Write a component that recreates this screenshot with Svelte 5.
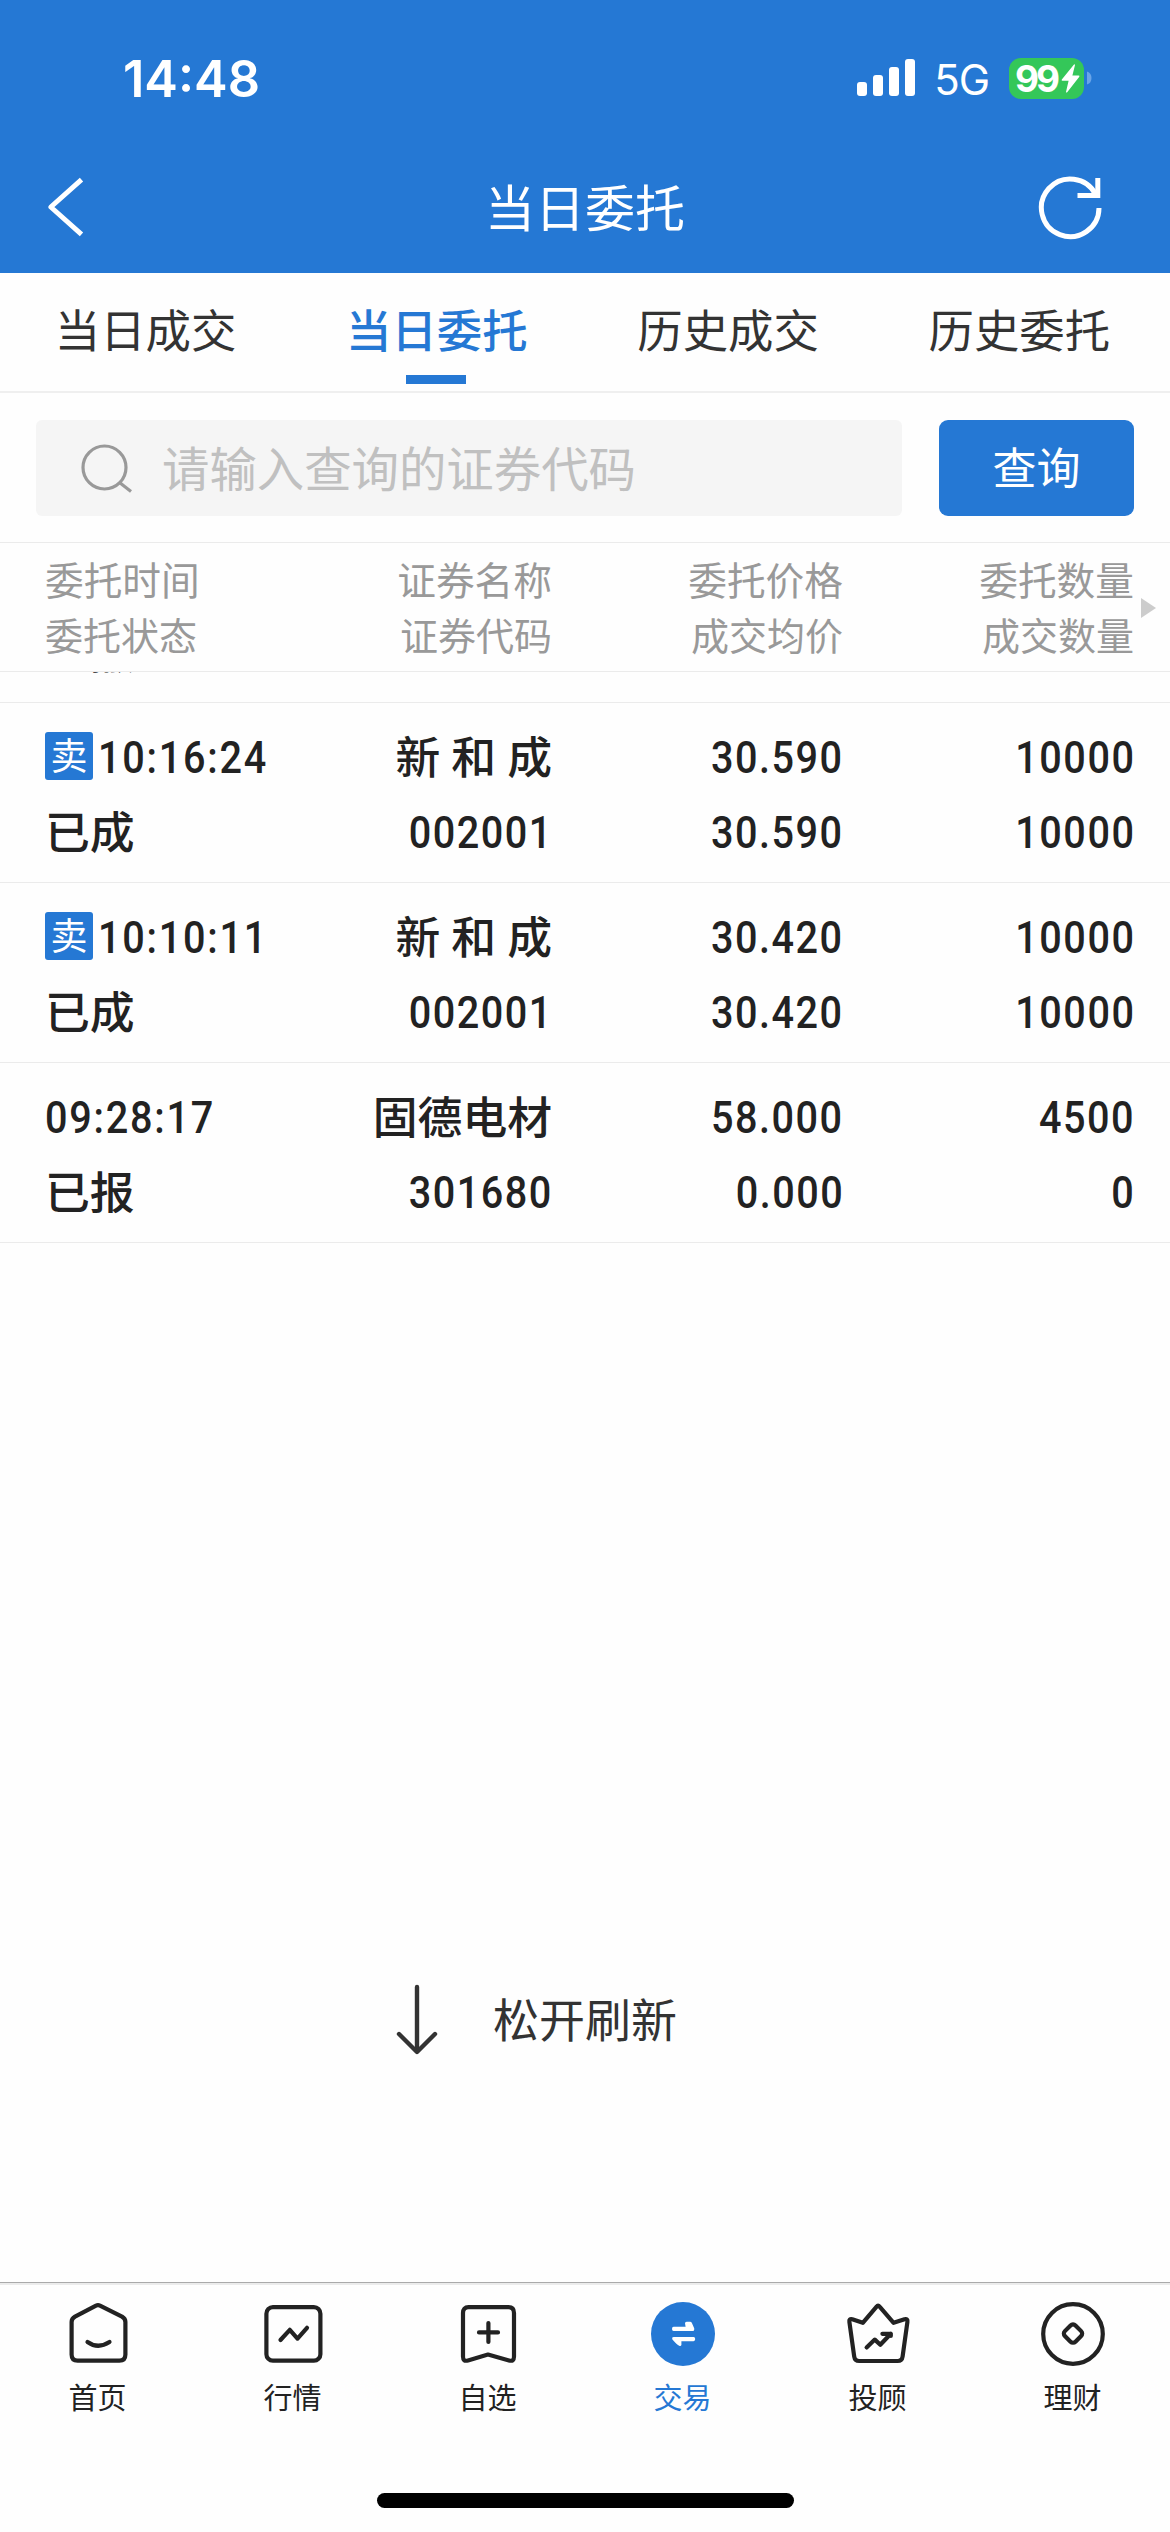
<script>
    const tabs = ['当日成交', '当日委托', '历史成交', '历史委托'];
    let activeTab = $state('当日委托');

    const columns = [
        ['委托时间', '委托状态'],
        ['证券名称', '证券代码'],
        ['委托价格', '成交均价'],
        ['委托数量', '成交数量']
    ];

    const orders = [
        { id: 2, side: '卖', time: '10:16:24', status: '已成', name: '新 和 成', code: '002001', price: '30.590', avg: '30.590', amount: '10000', filled: '10000' },
        { id: 3, side: '卖', time: '10:10:11', status: '已成', name: '新 和 成', code: '002001', price: '30.420', avg: '30.420', amount: '10000', filled: '10000' },
        { id: 4, side: '', time: '09:28:17', status: '已报', name: '固德电材', code: '301680', price: '58.000', avg: '0.000', amount: '4500', filled: '0' }
    ];

    const nav = [
        { id: 'home', label: '首页' },
        { id: 'market', label: '行情' },
        { id: 'watch', label: '自选' },
        { id: 'trade', label: '交易' },
        { id: 'advisor', label: '投顾' },
        { id: 'wealth', label: '理财' }
    ];
    let activeNav = $state('trade');
</script>

<div class="app">
    <header>
        <div class="status">
            <span class="clock">14:48</span>
            <div class="indicators">
                <svg class="signal" width="58" height="38" viewBox="0 0 58 38" fill="#fff">
                    <rect x="0" y="23" width="10" height="14" rx="3" />
                    <rect x="16" y="16" width="10" height="21" rx="3" />
                    <rect x="32" y="8" width="10" height="29" rx="3" />
                    <rect x="48" y="0" width="10" height="37" rx="3" />
                </svg>
                <span class="network">5G</span>
                <div class="battery">
                    <span>99</span>
                    <svg width="19" height="29" viewBox="0 0 19 29" fill="#fff">
                        <path d="M13 0.5 L0.8 15.6 Q0.2 16.8 1.5 16.8 H7.6 L5 28 Q5.2 29 6.2 28.2 L18.3 12.8 Q18.9 11.6 17.5 11.6 H11.4 L14 1 Q13.8 0 13 0.5 Z" />
                    </svg>
                </div>
                <svg class="nub" width="5" height="14" viewBox="0 0 5 14">
                    <path d="M0 0.5 Q4.5 2 4.5 7 Q4.5 12 0 13.5 Z" fill="#6aa5e8" />
                </svg>
            </div>
        </div>
        <div class="titlebar">
            <button class="plain" aria-label="返回">
                <svg width="44" height="62" viewBox="0 0 44 62" fill="none" stroke="#fff" stroke-width="5">
                    <path d="M38.5 3.6 L7.8 31 L38.5 58.4" stroke-linejoin="round" />
                </svg>
            </button>
            <h1>当日委托</h1>
            <button class="plain" aria-label="刷新">
                <svg width="66" height="66" viewBox="0 0 66 66" fill="none" stroke="#fff" stroke-width="5">
                    <path d="M62 34 A28.8 28.8 0 1 1 58.8 20.6" />
                    <path d="M60.8 4 V21.6 H40.5" />
                </svg>
            </button>
        </div>
    </header>

    <nav class="tabs">
        {#each tabs as tab}
            <button class="tab" class:active={tab === activeTab} onclick={() => (activeTab = tab)}>{tab}</button>
        {/each}
    </nav>

    <div class="search">
        <div class="field">
            <svg width="54" height="50" viewBox="0 0 54 50" fill="none" stroke="#999" stroke-width="3.2">
                <circle cx="24.5" cy="24.5" r="21.5" />
                <path d="M39.5 39.5 L51 48.5" />
            </svg>
            <span>请输入查询的证券代码</span>
        </div>
        <button class="query">查询</button>
    </div>

    <div class="columns">
        {#each columns as [top, bottom]}
            <div class="cell">
                <span>{top}</span>
                <span class="sub">{bottom}</span>
            </div>
        {/each}
        <i class="more"></i>
    </div>

    <div class="list">
        <!-- row scrolled almost out of view -->
        <div class="row">
            <div class="cell last">
                <span class="cn">已撤</span>
            </div>
        </div>
        {#each orders as order (order.id)}
            <div class="row">
                <div class="cell">
                    <div class="line">
                        {#if order.side}<b class="side">{order.side}</b>{/if}
                        <span class="num">{order.time}</span>
                    </div>
                    <div class="line cn">{order.status}</div>
                </div>
                <div class="cell">
                    <div class="line cn name">{order.name}</div>
                    <div class="line num">{order.code}</div>
                </div>
                <div class="cell">
                    <div class="line num">{order.price}</div>
                    <div class="line num">{order.avg}</div>
                </div>
                <div class="cell">
                    <div class="line num">{order.amount}</div>
                    <div class="line num">{order.filled}</div>
                </div>
            </div>
        {/each}
    </div>

    <div class="pull">
        <svg width="42" height="72" viewBox="0 0 42 72" fill="none" stroke="#333" stroke-width="4.4" stroke-linecap="round" stroke-linejoin="round">
            <path d="M21 3 V67" />
            <path d="M3 50 L21 68 L39 50" />
        </svg>
        <span>松开刷新</span>
    </div>

    <footer>
        {#each nav as item (item.id)}
            <button class="item" class:active={item.id === activeNav} onclick={() => (activeNav = item.id)}>
                <svg width="66" height="66" viewBox="0 0 66 66" fill="none" stroke="#222" stroke-width="4.2" stroke-linecap="round" stroke-linejoin="round">
                    {#if item.id === 'home'}
                        <path d="M31 4.6 Q33 3.6 35 4.6 L57 15.6 Q60.4 17.6 60.4 21 V53.5 Q60.4 59.7 54.4 59.7 H12.6 Q6.6 59.7 6.6 53.5 V21 Q6.6 17.6 10 15.6 Z" />
                        <path d="M22.5 41 Q33 48.5 44.5 41" />
                    {:else if item.id === 'market'}
                        <rect x="6.4" y="6.2" width="54" height="53.5" rx="6.5" />
                        <path d="M20.5 39 L29.8 28.8 L37.5 37.6 L47 26.8" />
                    {:else if item.id === 'watch'}
                        <path d="M13.5 6.2 H53.5 Q59 6.2 59 12 V55.5 Q59 61 54 59.4 L33 53.6 L13 59.4 Q8 61 8 55.5 V12 Q8 6.2 13.5 6.2 Z" />
                        <path d="M33.4 22 V41 M24 31.4 H43" />
                    {:else if item.id === 'trade'}
                        <circle cx="33" cy="33" r="32" fill="#2578d4" stroke="none" />
                        <path d="M23.6 25.8 H35.6 L35 22.2 Q35.2 20.8 37 20.8 H40 Q41.4 20.8 42 22.2 L44.2 27.2 Q44.6 30 42.6 30 H23.6 Q22 30 22 27.9 Q22 25.8 23.6 25.8 Z" fill="#fff" stroke="none" />
                        <path d="M43.6 40.2 H31.4 V44 Q31 45.4 29.2 44.8 Q27 43.6 22.4 38.4 Q21.6 36 23.8 36 H43.6 Q45.2 36 45.2 38.1 Q45.2 40.2 43.6 40.2 Z" fill="#fff" stroke="none" />
                    {:else if item.id === 'advisor'}
                        <path d="M31.6 5.6 Q33 3.6 34.6 5.6 L48.6 21.8 L59.5 18.2 Q63 17.4 62.4 21 L57.6 55.5 Q57 60 52.6 60 H14.2 Q9.8 60 9.2 55.5 L4.4 21 Q3.8 17.4 7.3 18.2 L17.8 21.8 Z" />
                        <path d="M21.6 46.4 L29.8 38.6 L35.3 43.8 L45.8 32.8 M37.4 32.8 H45.8 V35" />
                    {:else}
                        <circle cx="33" cy="33" r="29.8" />
                        <rect x="25.5" y="25.1" width="15" height="15" rx="3.5" transform="rotate(45 33 32.6)" />
                    {/if}
                </svg>
                <span>{item.label}</span>
            </button>
        {/each}
    </footer>
    <div class="home-indicator"></div>
</div>

<style>
    :global(body) {
        background: #fefefe;
    }

    .app {
        display: flex;
        flex-direction: column;
        width: 1170px;
        height: 2532px;
        overflow: hidden;
        background: #fefefe;
        color: #222;
        font-family: "Noto Sans CJK SC", sans-serif;
    }

    button {
        margin: 0;
        padding: 0;
        border: none;
        background: none;
        color: inherit;
        font-family: inherit;
    }

    svg {
        display: block;
        flex: none;
    }

    header {
        height: 273px;
        background: #2578d4;
        color: #fff;
    }

    .status {
        display: flex;
        justify-content: space-between;
        align-items: center;
        height: 156px;
        padding: 0 78px 0 123px;
        font-family: Inter, sans-serif;
    }

    .clock {
        font-size: 50.5px;
        font-weight: 600;
    }

    .indicators {
        display: flex;
        align-items: center;
    }

    .network {
        margin: 2px 20px 0 19px;
        font-size: 42px;
        letter-spacing: -1px;
    }

    .battery {
        display: flex;
        align-items: center;
        justify-content: flex-end;
        gap: 4px;
        box-sizing: border-box;
        width: 75px;
        height: 41px;
        padding-right: 4px;
        border-radius: 12px;
        background: #34c759;
        font-size: 37px;
        font-weight: 700;
        line-height: 41px;
        letter-spacing: -3px;
    }

    .nub {
        margin-left: 3px;
    }

    .titlebar {
        display: flex;
        justify-content: space-between;
        align-items: center;
        height: 102px;
        padding: 0 67px 0 43px;
    }

    h1 {
        margin: 0 0 4px 46px;
        font-size: 50px;
        font-weight: 400;
        line-height: 98px;
    }

    .tabs {
        display: flex;
        height: 118px;
        padding-right: 5px;
        border-bottom: 2px solid #efefef;
    }

    .tab {
        position: relative;
        flex: 1;
        padding-bottom: 8px;
        color: #333;
        font-size: 45.4px;
    }

    .tab.active {
        color: #2578d4;
        font-weight: 500;
    }

    .tab.active::after {
        content: '';
        position: absolute;
        left: 50%;
        bottom: 7px;
        width: 60px;
        height: 9px;
        margin-left: -31px;
        background: #2578d4;
    }

    .search {
        display: flex;
        gap: 37px;
        padding: 27px 36px 26px;
        border-bottom: 1px solid #ebebeb;
    }

    .field {
        display: flex;
        align-items: center;
        gap: 28px;
        flex: 1;
        height: 96px;
        padding-left: 44px;
        border-radius: 6px;
        background: #f5f5f5;
        color: #c0c0c0;
        font-size: 47.4px;
        line-height: 92px;
    }

    .field span {
        margin-bottom: 3px;
    }

    .query {
        width: 195px;
        height: 96px;
        padding-bottom: 4px;
        border-radius: 9px;
        background: #2578d4;
        color: #fff;
        font-size: 44px;
    }

    .columns,
    .row {
        position: relative;
        display: grid;
        grid-template-columns: 216px repeat(3, 291px);
        padding-left: 45px;
    }

    .cell {
        display: flex;
        flex-direction: column;
        align-items: flex-end;
        white-space: pre;
    }

    .cell:first-child {
        align-items: flex-start;
    }

    .columns {
        height: 128px;
        border-bottom: 1px solid #ebebeb;
        color: #999;
        font-size: 38.7px;
        line-height: 56px;
    }

    .columns .cell {
        padding-top: 7px;
    }

    .sub {
        font-size: 38px;
    }

    .more {
        position: absolute;
        left: 1141px;
        top: 55px;
        border: 10px solid transparent;
        border-left: 15px solid #ccc;
        border-right: none;
    }

    .list {
        display: flex;
        flex-direction: column;
        justify-content: flex-end;
        height: 571px;
        overflow: hidden;
    }

    .row {
        flex: none;
        height: 179px;
        border-bottom: 1px solid #ebebeb;
    }

    .row .cell {
        padding-top: 17px;
    }

    .row .last {
        padding-top: 92px;
    }

    .line {
        display: flex;
        align-items: center;
        height: 75px;
        line-height: 75px;
    }

    .cn {
        margin: -3px 0 3px;
        font-size: 44.8px;
        font-weight: 500;
        line-height: 75px;
    }

    .name {
        word-spacing: 1px;
    }

    /* narrow DIN-like figures */
    .num {
        font-family: Roboto, sans-serif;
        font-size: 45px;
        font-weight: 500;
        letter-spacing: 1.7px;
        transform: scaleX(0.88);
        transform-origin: right;
        margin-right: -1px;
    }

    .cell:first-child .num {
        letter-spacing: 2px;
        transform-origin: left;
    }

    .side {
        width: 48px;
        height: 48px;
        margin: 0 5px 3px 0;
        border-radius: 3px;
        background: #2578d4;
        color: #fff;
        font-size: 37px;
        font-weight: 400;
        line-height: 45px;
        text-align: center;
    }

    .pull {
        display: flex;
        align-items: center;
        gap: 55px;
        height: 72px;
        margin: 741px 0 0 396px;
        color: #333;
        font-size: 46px;
    }

    .pull span {
        margin-bottom: 6px;
    }

    footer {
        display: flex;
        height: 136px;
        margin-top: auto;
        padding-top: 18px;
        border-top: 1px solid #aaa;
        box-shadow: inset 0 2px #ececec;
    }

    .item {
        display: flex;
        flex: 1;
        flex-direction: column;
        align-items: center;
        gap: 8px;
        font-size: 29px;
        line-height: 42px;
    }

    .item.active {
        color: #2578d4;
    }

    .home-indicator {
        width: 417px;
        height: 15px;
        margin: 56px auto 24px;
        border-radius: 8px;
        background: #000;
    }
</style>
